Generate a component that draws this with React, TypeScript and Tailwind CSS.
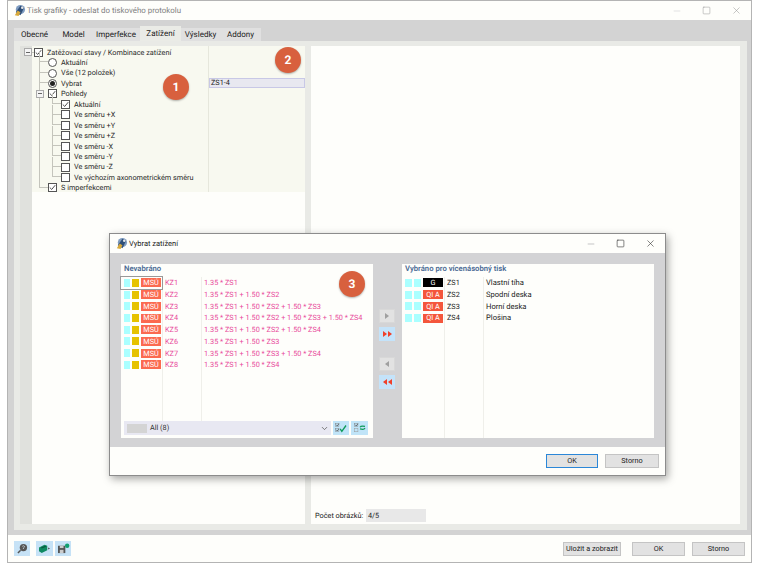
import { ChevronDown, Minus, Square, X } from "lucide-react";

const font = "font-['Roboto','Noto_Sans',sans-serif] [text-rendering:geometricPrecision]";

const tabs = [
  { label: "Obecné", w: "w-[41px]" },
  { label: "Model", w: "w-[37px]" },
  { label: "Imperfekce", w: "w-[48px]" },
  { label: "Zatížení", w: "w-[41px]", active: true },
  { label: "Výsledky", w: "w-[39px]" },
  { label: "Addony", w: "w-[41px]" },
];

const treeRows = [
  { kind: "check", level: 0, on: true, text: "Zatěžovací stavy / Kombinace zatížení", expander: true },
  { kind: "radio", level: 1, text: "Aktuální" },
  { kind: "radio", level: 1, text: "Vše (12 položek)" },
  { kind: "radio", level: 1, on: true, text: "Vybrat" },
  { kind: "check", level: 1, on: true, text: "Pohledy", expander: true },
  { kind: "check", level: 2, on: true, text: "Aktuální" },
  { kind: "check", level: 2, text: "Ve směru +X" },
  { kind: "check", level: 2, text: "Ve směru +Y" },
  { kind: "check", level: 2, text: "Ve směru +Z" },
  { kind: "check", level: 2, text: "Ve směru -X" },
  { kind: "check", level: 2, text: "Ve směru -Y" },
  { kind: "check", level: 2, text: "Ve směru -Z" },
  { kind: "check", level: 2, text: "Ve výchozím axonometrickém směru" },
  { kind: "check", level: 1, on: true, text: "S imperfekcemi" },
];

const combos = [
  ["KZ1", "1.35 * ZS1"],
  ["KZ2", "1.35 * ZS1 + 1.50 * ZS2"],
  ["KZ3", "1.35 * ZS1 + 1.50 * ZS2 + 1.50 * ZS3"],
  ["KZ4", "1.35 * ZS1 + 1.50 * ZS2 + 1.50 * ZS3 + 1.50 * ZS4"],
  ["KZ5", "1.35 * ZS1 + 1.50 * ZS2 + 1.50 * ZS4"],
  ["KZ6", "1.35 * ZS1 + 1.50 * ZS3"],
  ["KZ7", "1.35 * ZS1 + 1.50 * ZS3 + 1.50 * ZS4"],
  ["KZ8", "1.35 * ZS1 + 1.50 * ZS4"],
];

const cases = [
  { tag: "G", id: "ZS1", name: "Vlastní tíha", black: true },
  { tag: "QI A", id: "ZS2", name: "Spodní deska" },
  { tag: "QI A", id: "ZS3", name: "Horní deska" },
  { tag: "QI A", id: "ZS4", name: "Plošina" },
];

function AppIcon() {
  return (
    <svg viewBox="0 0 14 14" className="h-[13px] w-[13px] shrink-0">
      <circle cx="8" cy="6" r="5" fill="#7f9cc0" />
      <path d="M3 9 L8 2 L12 4 L8 12 Z" fill="#2f4f78" />
      <path d="M2 12 L5 7 L8 9 L6 13 Z" fill="#d8a93a" />
      <circle cx="10" cy="4" r="1.4" fill="#e8e8e8" />
    </svg>
  );
}

function CheckBox({ on }: { on?: boolean }) {
  return (
    <span className="flex h-[9px] w-[9px] shrink-0 items-center justify-center border border-[#555] bg-white">
      {on && (
        <svg viewBox="0 0 9 9" className="h-[7px] w-[7px]">
          <path d="M1 4.5 L3.5 7 L8 1.5" fill="none" stroke="#333" strokeWidth="1.1" />
        </svg>
      )}
    </span>
  );
}

function Radio({ on }: { on?: boolean }) {
  return (
    <span className="flex h-[9px] w-[9px] shrink-0 items-center justify-center rounded-full border border-[#555] bg-white">
      {on && <span className="h-[5px] w-[5px] rounded-full bg-[#222]" />}
    </span>
  );
}

function Expander() {
  return (
    <span className="flex h-[8px] w-[8px] shrink-0 items-center justify-center border border-[#aaa] bg-[#f4f4f4]">
      <span className="h-px w-[4px] bg-[#666]" />
    </span>
  );
}

function TreeRow({ row, index }: { row: (typeof treeRows)[number]; index: number }) {
  return (
    <div className="relative flex h-[10.45px] items-center">
      {/* tree guides */}
      {row.level === 0 && (
        <>
          <span className="absolute left-[-2px] top-1/2 w-[2px] border-t border-[#c4c4bc]" />
          <span className="absolute left-[-10px] top-[1px]">
            <Expander />
          </span>
        </>
      )}
      {row.level === 1 && !row.expander && (
        <span className="absolute left-[5px] top-[-5px] h-[10px] w-[9px] border-b border-l border-[#c4c4bc]" />
      )}
      {row.level === 1 && index < 13 && (
        <span className="absolute left-[5px] top-0 h-full border-l border-[#c4c4bc]" />
      )}
      {row.level === 2 && (
        <>
          <span className="absolute left-[5px] top-0 h-full border-l border-[#c4c4bc]" />
          <span className="absolute left-[18px] top-[-5px] h-[10px] w-[9px] border-b border-l border-[#c4c4bc]" />
        </>
      )}
      <span
        className={
          row.level === 0
            ? "flex items-center"
            : row.level === 1
              ? "ml-[14px] flex items-center"
              : "ml-[27px] flex items-center"
        }
      >
        {row.kind === "radio" ? <Radio on={row.on} /> : <CheckBox on={row.on} />}
        <span className="ml-[4px] whitespace-nowrap text-[7.3px] leading-none text-[#2a2a2a]">
          {row.text}
        </span>
      </span>
      {row.expander && row.level === 1 && (
        <span className="absolute left-[2px] top-[1px]">
          <Expander />
        </span>
      )}
    </div>
  );
}

function Badge({ n, className }: { n: number; className: string }) {
  return (
    <span
      className={`absolute flex h-[26px] w-[26px] items-center justify-center rounded-full bg-[#d8603e] text-[12px] font-bold text-white shadow-[0_1px_2px_rgba(0,0,0,0.3)] ${className}`}
    >
      {n}
    </span>
  );
}

function GrayButton({ label, w, focus }: { label: string; w: string; focus?: boolean }) {
  return (
    <button
      className={`flex h-[14px] items-center justify-center whitespace-nowrap border bg-[#e2e2e2] text-[7.3px] leading-none text-[#222] ${w} ${
        focus ? "border-[#2b87d8]" : "border-[#c4c4c4]"
      }`}
    >
      {label}
    </button>
  );
}

function Arrow({ dir, double }: { dir: "right" | "left"; double?: boolean }) {
  const path = dir === "right" ? "M0 0 L4 3 L0 6 Z" : "M4 0 L0 3 L4 6 Z";
  return (
    <button
      className={`flex h-[14px] w-[16px] items-center justify-center gap-0 ${
        double ? "bg-[#c4e3fa]" : "border border-[#d8d8d8] bg-[#e2e2e2]"
      }`}
    >
      <svg viewBox="0 0 4 6" className="h-[6px] w-[4px]">
        <path d={path} fill={double ? "#f0402a" : "#a0a0a0"} />
      </svg>
      {double && (
        <svg viewBox="0 0 4 6" className="ml-px h-[6px] w-[4px]">
          <path d={path} fill="#f0402a" />
        </svg>
      )}
    </button>
  );
}

function Swatch({ color, w }: { color: string; w: string }) {
  return <span className={`h-[8px] shrink-0 ${color} ${w}`} />;
}

function SelectDialog() {
  return (
    <div className="absolute left-[109px] top-[233px] flex h-[243px] w-[557px] flex-col border border-[#8c8c8c] bg-[#fefefb] shadow-[2px_3px_8px_rgba(0,0,0,0.35)]">
      <div className="flex h-[19px] shrink-0 items-center pl-[5px]">
        <AppIcon />
        <span className="ml-[1px] text-[7.5px] leading-none text-[#222]">Vybrat zatížení</span>
        <div className="ml-auto flex items-center gap-[20px] pr-[9px] text-[#333]">
          <Minus size={10} className="text-[#bbb]" />
          <Square size={9} strokeWidth={1.6} />
          <X size={11} strokeWidth={1.3} />
        </div>
      </div>

      <div className="flex h-[194px] shrink-0 gap-[6px] bg-[#d3d3d5] px-[11px] pt-[11px]">
        {/* left list */}
        <div className="relative flex h-[174px] w-[252px] shrink-0 flex-col bg-[#fefefb] pb-[3px]">
          <div className="h-[13px] shrink-0 pl-[3px] pt-[1px] text-[7.7px] font-semibold leading-none text-[#4a6a94]">
            Nevabráno
          </div>
          <div className="flex min-h-0 flex-1">
            <div className="flex w-[42px] shrink-0 flex-col border-r border-[#efefea]">
              {combos.map((c, i) => (
                <div
                  key={c[0]}
                  className={`flex h-[11.72px] shrink-0 items-center gap-[2px] pl-[3px] ${
                    i === 0 ? "outline outline-1 outline-[#999]" : ""
                  }`}
                >
                  <Swatch color="bg-[#aaffff]" w="w-[6px]" />
                  <Swatch color="bg-[#e6c200]" w="w-[7px]" />
                  <span className="flex h-[9px] w-[20px] shrink-0 items-center justify-center bg-[#fb6a50] text-[7.3px] leading-none text-white">
                    MSÚ
                  </span>
                </div>
              ))}
            </div>
            <div className="flex w-[39px] shrink-0 flex-col border-r border-[#efefea] pl-[2px]">
              {combos.map((c) => (
                <div key={c[0]} className="flex h-[11.72px] shrink-0 items-center text-[7.3px] leading-none text-[#e8489a]">
                  {c[0]}
                </div>
              ))}
            </div>
            <div className="flex flex-1 flex-col pl-[2px]">
              {combos.map((c) => (
                <div key={c[0]} className="flex h-[11.72px] shrink-0 items-center whitespace-nowrap text-[7.3px] leading-none text-[#e8489a]">
                  {c[1]}
                </div>
              ))}
            </div>
          </div>
          <div className="flex h-[14px] shrink-0 gap-[2px] pl-[3px]">
            <div className="flex w-[207px] items-center bg-[#e8e8f2] pl-[3px] pr-[2px]">
              <span className="h-[9px] w-[20px] bg-[#d4d4d4]" />
              <span className="ml-[3px] text-[7.3px] leading-none text-[#333]">All (8)</span>
              <ChevronDown size={9} className="ml-auto text-[#555]" />
            </div>
            <button className="flex h-[14px] w-[16px] items-center justify-center bg-[#c0e4f8]">
              <svg viewBox="0 0 14 12" className="h-[10px] w-[12px]">
                <path d="M1 2 L2.5 3.5 L4.5 1" fill="none" stroke="#444" strokeWidth="0.9" />
                <path d="M1 8 L2.5 9.5 L4.5 7" fill="none" stroke="#444" strokeWidth="0.9" />
                <rect x="0.5" y="0.5" width="4" height="4" fill="none" stroke="#777" strokeWidth="0.5" />
                <rect x="0.5" y="6.5" width="4" height="4" fill="none" stroke="#777" strokeWidth="0.5" />
                <path d="M6 7 L8 10 L13 3" fill="none" stroke="#0d9a5a" strokeWidth="1.6" />
              </svg>
            </button>
            <button className="flex h-[14px] w-[17px] items-center justify-center bg-[#c0e4f8]">
              <svg viewBox="0 0 14 12" className="h-[10px] w-[12px]">
                <path d="M1 2 L2.5 3.5 L4.5 1" fill="none" stroke="#444" strokeWidth="0.9" />
                <rect x="0.5" y="0.5" width="4" height="4" fill="none" stroke="#777" strokeWidth="0.5" />
                <rect x="0.5" y="6.5" width="4" height="4" fill="none" stroke="#999" strokeWidth="0.6" />
                <path d="M7 5 Q8 3 13 4 M13 6 Q12 8.5 7 7" fill="none" stroke="#0d9a5a" strokeWidth="1.4" />
              </svg>
            </button>
          </div>
        </div>

        {/* move buttons */}
        <div className="flex w-[17px] shrink-0 flex-col gap-[4px] pt-[45px]">
          <Arrow dir="right" />
          <Arrow dir="right" double />
          <div className="h-[8px]" />
          <Arrow dir="left" />
          <Arrow dir="left" double />
        </div>

        {/* right list */}
        <div className="flex h-[174px] w-[252px] shrink-0 flex-col bg-[#fefefb]">
          <div className="h-[13px] shrink-0 pl-[3px] pt-[1px] text-[7.7px] font-semibold leading-none text-[#4a6a94]">
            Vybráno pro vícenásobný tisk
          </div>
          <div className="flex min-h-0 flex-1">
            <div className="flex w-[43px] shrink-0 flex-col border-r border-[#efefea]">
              {cases.map((c) => (
                <div key={c.id} className="flex h-[11.72px] shrink-0 items-center gap-[2px] pl-[3px]">
                  <Swatch color="bg-[#aaffff]" w="w-[7px]" />
                  <Swatch color="bg-[#aaffff]" w="w-[7px]" />
                  <span
                    className={`flex h-[9px] w-[20px] shrink-0 items-center justify-center text-[7.3px] leading-none text-white ${
                      c.black ? "bg-black" : "bg-[#f4563c]"
                    }`}
                  >
                    {c.tag}
                  </span>
                </div>
              ))}
            </div>
            <div className="flex w-[39px] shrink-0 flex-col border-r border-[#efefea] pl-[2px]">
              {cases.map((c) => (
                <div key={c.id} className="flex h-[11.72px] shrink-0 items-center text-[7.3px] leading-none text-[#222]">
                  {c.id}
                </div>
              ))}
            </div>
            <div className="flex flex-1 flex-col pl-[2px]">
              {cases.map((c) => (
                <div key={c.id} className="flex h-[11.72px] shrink-0 items-center text-[7.6px] leading-none text-[#222]">
                  {c.name}
                </div>
              ))}
            </div>
          </div>
        </div>
      </div>

      <div className="flex flex-1 items-center justify-end gap-[7px] pr-[6px]">
        <GrayButton label="OK" w="w-[52px]" focus />
        <GrayButton label="Storno" w="w-[54px]" />
      </div>
      <Badge n={3} className="left-[229px] top-[37px]" />
    </div>
  );
}

export default function App() {
  return (
    <div className={`relative h-[563px] w-[760px] overflow-hidden bg-white ${font}`}>
      <div className="ml-[7px] flex h-[563px] w-[745px] flex-col border border-[#b4b4b4] bg-[#fefefb]">
        {/* title bar */}
        <div className="flex h-[19px] shrink-0 items-center pl-[5px]">
          <AppIcon />
          <span className="ml-[1px] text-[7.9px] leading-none text-[#808080]">
            Tisk grafiky - odeslat do tiskového protokolu
          </span>
          <div className="ml-auto flex items-center gap-[20px] pr-[9px] text-[#999]">
            <Minus size={10} className="text-[#ddd]" />
            <Square size={9} strokeWidth={1.4} />
            <X size={11} strokeWidth={1.2} />
          </div>
        </div>

        {/* body */}
        <div className="flex h-[515px] shrink-0 flex-col bg-[#d3d3d3] pb-[5px] pl-[6px] pr-[4px] pt-[6px]">
          <div className="flex h-[15px] shrink-0 items-end">
            {tabs.map((t) => (
              <div
                key={t.label}
                className={`flex items-center justify-center text-[8px] leading-none text-[#222] ${t.w} ${
                  t.active ? "h-[15px] bg-[#eaebe6]" : "h-[13px] bg-[#e0e0e0]"
                }`}
              >
                {t.label}
              </div>
            ))}
          </div>
          <div className="flex min-h-0 flex-1 gap-[6px] bg-[#e9eae6] pb-[6px] pl-[6px] pr-[7px] pt-[5px]">
            {/* settings tree */}
            <div className="flex w-[285px] shrink-0">
              <div className="w-[12px] shrink-0 bg-[#e0e1dd]" />
              <div className="flex flex-1 flex-col bg-[#fefefb]">
                <div className="flex h-[146px] shrink-0 bg-[#f8f9f0]">
                  <div className="relative w-[177px] shrink-0 border-r border-[#e6e7dc] pl-[2px] pt-[1px]">
                    {treeRows.map((row, i) => (
                      <TreeRow key={i} row={row} index={i} />
                    ))}
                  </div>
                  <div className="flex-1 pt-[32px]">
                    <div className="flex h-[10px] items-center border border-[#c8c8e6] bg-[#e8e8f0] pl-[1px] text-[7.3px] leading-none text-[#222]">
                      ZS1-4
                    </div>
                  </div>
                </div>
              </div>
            </div>
            {/* preview */}
            <div className="flex flex-1 flex-col justify-end bg-[#fefefb] pb-[2px] pl-[4px]">
              <div className="flex items-center">
                <span className="w-[51px] whitespace-nowrap text-[7.3px] leading-none text-[#222]">Počet obrázků:</span>
                <span className="flex h-[13px] w-[60px] items-center bg-[#e8e8e8] pl-[2px] text-[7.3px] leading-none text-[#222]">
                  4/5
                </span>
              </div>
            </div>
          </div>
        </div>

        {/* footer */}
        <div className="flex flex-1 items-center pl-[6px] pr-[6px]">
          <div className="flex gap-[2px]">
            <button className="mr-[4px] flex h-[15px] w-[16px] items-center justify-center bg-[#c6e2f6]">
              <svg viewBox="0 0 12 12" className="h-[11px] w-[11px]">
                <circle cx="7" cy="5" r="4" fill="#555" />
                <path d="M4 8 L1 11" stroke="#555" strokeWidth="1.6" />
                <path d="M5.8 3.6 Q7.3 2.4 8.2 3.8 Q8 5 7 5.5 V6.5" fill="none" stroke="#d8e8f0" strokeWidth="0.8" />
              </svg>
            </button>
            <button className="flex h-[15px] w-[17px] items-center justify-center bg-[#c6e2f6]">
              <svg viewBox="0 0 14 12" className="h-[11px] w-[13px]">
                <path d="M1 5 L7 2 L10 3 V8 L4 11 L1 9 Z" fill="#0f8a62" />
                <path d="M3 5 L8 3 L9 4 L4 6 Z" fill="#0a5a40" />
                <path d="M11 5 L13 6 L11 7 Z" fill="#444" />
              </svg>
            </button>
            <button className="flex h-[15px] w-[16px] items-center justify-center bg-[#c6e2f6]">
              <svg viewBox="0 0 14 12" className="h-[11px] w-[13px]">
                <path d="M1 3 H9 V11 H1 Z" fill="#555" />
                <rect x="3" y="3" width="4" height="2.5" fill="#ccc" />
                <rect x="3" y="7.5" width="4" height="3.5" fill="#ccc" />
                <circle cx="11" cy="3" r="2.4" fill="#0fa070" />
              </svg>
            </button>
          </div>
          <div className="ml-auto flex gap-[7px]">
            <div className="mr-[4px]">
              <GrayButton label="Uložit a zobrazit" w="w-[58px]" />
            </div>
            <GrayButton label="OK" w="w-[53px]" />
            <GrayButton label="Storno" w="w-[53px]" />
          </div>
        </div>
      </div>

      <Badge n={1} className="left-[163px] top-[74px]" />
      <Badge n={2} className="left-[275px] top-[47px]" />
      <SelectDialog />
    </div>
  );
}
